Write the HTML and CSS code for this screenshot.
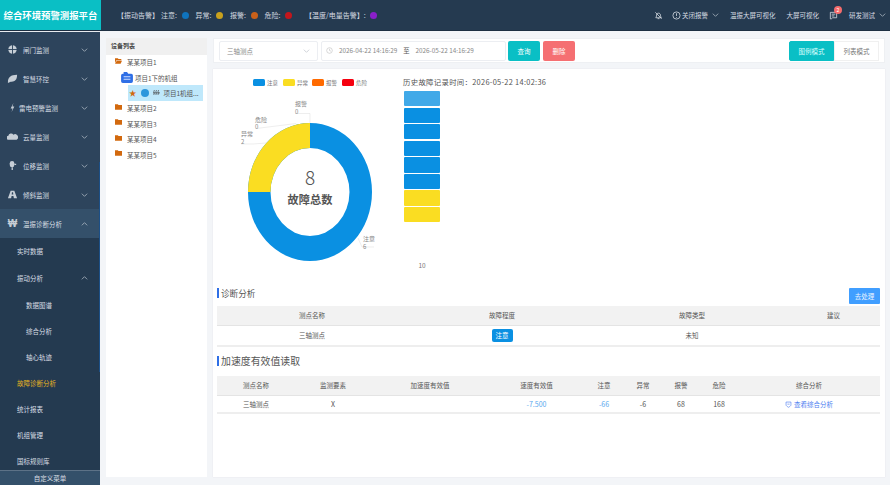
FILE: index.html
```html
<!DOCTYPE html>
<html lang="zh-CN">
<head>
    <meta charset="UTF-8">
    <title>综合环境预警测报平台</title>
    <link rel="stylesheet" href="styles.css">
</head>
<body>
<div class="app">
    <!-- 顶部 -->
    <header class="top">
        <div class="logo">综合环境预警测报平台</div>
        <div class="alarm alarm-first">【振动告警】</div>
        <div class="alarm">注意: <i class="dot dot-blue"></i></div>
        <div class="alarm">异常: <i class="dot dot-yellow"></i></div>
        <div class="alarm">报警: <i class="dot dot-orange"></i></div>
        <div class="alarm">危险: <i class="dot dot-red"></i></div>
        <div class="alarm alarm-temp">【温度/电量告警】: <i class="dot dot-purple"></i></div>
        <div class="top-right">
            <svg class="top-icon" viewBox="0 0 10 10"><path d="M2 7.500c1-1 .6-3 1.200-4.200C3.700 2.300 6 2 6.800 3.300c.6 1 .3 3 1.300 4.200zM4 8.500h2M1.500 1.500l7 7"/></svg>
            <svg class="top-icon top-icon-info" viewBox="0 0 10 10"><circle cx="5" cy="5" r="4"/><path d="M5 2.500v3M5 6.800v.8"/></svg>
            <span class="top-link top-link-close">关闭报警</span>
            <svg class="chev chev-top" viewBox="0 0 10 6"><path d="M1 1l4 4 4-4"/></svg>
            <span class="top-link top-link-wide">温振大屏可视化</span>
            <span class="top-link top-link-wide">大屏可视化</span>
            <span class="msg">
                <svg class="top-icon" viewBox="0 0 10 10"><path d="M1.500 1.500h7v6H4L2.500 8.800H1.500zM3 3.500h4M3 5.500h3"/></svg>
                <b class="badge">2</b>
            </span>
            <span class="top-link top-link-user">研发测试</span>
            <svg class="chev chev-top" viewBox="0 0 10 6"><path d="M1 1l4 4 4-4"/></svg>
        </div>
    </header>

    <!-- 左侧菜单 -->
    <aside class="side">
        <nav class="menu">
            <div class="menu-item">
                <svg class="menu-icon" viewBox="0 0 12 12"><circle cx="6" cy="6" r="4.600"/><path class="cut" d="M1 6h10M6 1v10"/></svg>
                <span>闸门监测</span>
                <svg class="chev" viewBox="0 0 10 6"><path d="M1 1l4 4 4-4"/></svg>
            </div>
            <div class="menu-item">
                <svg class="menu-icon" viewBox="0 0 12 12"><path d="M1 10C1 5 4 2 11 2c0 6-3 8-7 7.500L1 11z"/></svg>
                <span>智慧环控</span>
                <svg class="chev" viewBox="0 0 10 6"><path d="M1 1l4 4 4-4"/></svg>
            </div>
            <div class="menu-item menu-item-tight">
                <svg class="menu-icon" viewBox="0 0 12 12"><path d="M7 1L4 7h2l-1 4 3-6H6z"/></svg>
                <span>雷电预警监测</span>
                <svg class="chev" viewBox="0 0 10 6"><path d="M1 1l4 4 4-4"/></svg>
            </div>
            <div class="menu-item">
                <svg class="menu-icon" viewBox="0 0 12 12"><path d="M1 9.500a2.200 2.200 0 0 1 .5-4.300A3 3 0 0 1 7 4a2.800 2.800 0 0 1 3.500 5.500z"/></svg>
                <span>云量监测</span>
                <svg class="chev" viewBox="0 0 10 6"><path d="M1 1l4 4 4-4"/></svg>
            </div>
            <div class="menu-item">
                <svg class="menu-icon" viewBox="0 0 12 12"><rect x="3" y="1" width="5" height="7" rx="2.500"/><path d="M5 8h1.400v3H5zM8 4h2v1.400H8z"/></svg>
                <span>位移监测</span>
                <svg class="chev" viewBox="0 0 10 6"><path d="M1 1l4 4 4-4"/></svg>
            </div>
            <div class="menu-item">
                <svg class="menu-icon" viewBox="0 0 12 12"><path d="M4 2h4l3 8H7.500L7 7.500H5L4.500 10H1zM5.400 3.500l-.3 2.500h1.800l-.3-2.500z"/></svg>
                <span>倾斜监测</span>
                <svg class="chev" viewBox="0 0 10 6"><path d="M1 1l4 4 4-4"/></svg>
            </div>
            <div class="menu-item menu-item-open">
                <span class="won">₩</span>
                <span>温振诊断分析</span>
                <svg class="chev" viewBox="0 0 10 6"><path d="M1 5l4-4 4 4"/></svg>
            </div>
            <div class="sub sub-first">实时数据</div>
            <div class="sub sub-parent">
                <span>振动分析</span>
                <svg class="chev" viewBox="0 0 10 6"><path d="M1 5l4-4 4 4"/></svg>
            </div>
            <div class="sub sub-deep">数据图谱</div>
            <div class="sub sub-deep">综合分析</div>
            <div class="sub sub-deep">轴心轨迹</div>
            <div class="sub sub-active">故障诊断分析</div>
            <div class="sub">统计报表</div>
            <div class="sub">机组管理</div>
            <div class="sub">国标规则库</div>
        </nav>
        <div class="side-foot">自定义菜单</div>
        <div class="side-scroll"></div>
    </aside>

    <main class="content">
        <!-- 设备树 -->
        <section class="tree">
            <div class="tree-title">设备列表</div>
            <div class="tree-row">
                <svg class="folder" viewBox="0 0 10 8"><path d="M0 0h4l1 1h4v2H2L0 7zM2.500 3.500H10L8 8H0z"/></svg>
                <span>某某项目1</span>
            </div>
            <div class="tree-row tree-row-unit">
                <svg class="unit-icon" viewBox="0 0 14 13"><path d="M3 0h4l1.500 2H12a2 2 0 0 1 2 2v7a2 2 0 0 1-2 2H2a2 2 0 0 1-2-2V4a2 2 0 0 1 2-2h1z" fill="#2f6fe6"/><path d="M3 5h8v1.200H3zM3 8h8v1.200H3z" fill="#cfe0ff"/></svg>
                <span>项目1下的机组</span>
            </div>
            <div class="tree-row tree-row-point">
                <span class="star">★</span>
                <i class="ball"></i>
                <svg class="wave" viewBox="0 0 10 9"><path d="M1 8c2-2-1-4 1-7M4 8c2-2-1-4 1-7M7 8c2-2-1-4 1-7M0 5h10"/></svg>
                <span class="point-name">项目1机组...</span>
            </div>
            <div class="tree-row"><svg class="folder" viewBox="0 0 10 8"><path d="M0 0h4l1 1h5v7H0z"/></svg><span>某某项目2</span></div>
            <div class="tree-row"><svg class="folder" viewBox="0 0 10 8"><path d="M0 0h4l1 1h5v7H0z"/></svg><span>某某项目3</span></div>
            <div class="tree-row"><svg class="folder" viewBox="0 0 10 8"><path d="M0 0h4l1 1h5v7H0z"/></svg><span>某某项目4</span></div>
            <div class="tree-row"><svg class="folder" viewBox="0 0 10 8"><path d="M0 0h4l1 1h5v7H0z"/></svg><span>某某项目5</span></div>
        </section>

        <div class="right">
            <!-- 查询条件 -->
            <div class="toolbar">
                <div class="select">
                    <span>三轴测点</span>
                    <svg class="chev chev-gray" viewBox="0 0 10 6"><path d="M1 1l4 4 4-4"/></svg>
                </div>
                <div class="dates">
                    <svg class="clock" viewBox="0 0 10 10"><circle cx="5" cy="5" r="4"/><path d="M5 2.500V5l2 1"/></svg>
                    <span>2026-04-22 14:16:29</span>
                    <span class="date-to">至</span>
                    <span>2026-05-22 14:16:29</span>
                </div>
                <button class="btn btn-teal">查询</button>
                <button class="btn btn-red">删除</button>
                <div class="modes">
                    <span class="mode mode-on">图例模式</span>
                    <span class="mode">列表模式</span>
                </div>
            </div>

            <div class="panel">
                <div class="charts">
                    <svg class="donut" viewBox="213 69 190 216">
                        <g class="legend">
                            <rect x="253" y="79" width="12" height="7" rx="1.500" fill="#0a90e2"/><text x="267" y="84.500">注意</text>
                            <rect x="283" y="79" width="12" height="7" rx="1.500" fill="#fadd22"/><text x="297" y="84.500">异常</text>
                            <rect x="312" y="79" width="12" height="7" rx="1.500" fill="#ff6a00"/><text x="326" y="84.500">报警</text>
                            <rect x="342" y="79" width="12" height="7" rx="1.500" fill="#f5000f"/><text x="356" y="84.500">危险</text>
                        </g>
                        <path d="M248 192A62 69 0 0 1 372 192A62 69 0 0 1 248 192ZM270.500 192A39.500 44 0 0 0 349.500 192A39.500 44 0 0 0 270.500 192Z" fill="#0a90e2"/>
                        <path d="M248 192A62 69 0 0 1 310 123V148A39.500 44 0 0 0 270.500 192Z" fill="#fadd22"/>
                        <path class="lead" d="M295 113.500h15v9.500M256 128.500l40-5M241 144h12l13-1M358 238l4 9h12"/>
                        <g class="pie-label">
                            <text x="295" y="105.500">报警</text><text x="295" y="113.500">0</text>
                            <text x="255" y="121.500">危险</text><text x="255" y="129">0</text>
                            <text x="241" y="136">异常</text><text x="241" y="144">2</text>
                            <text x="363" y="241">注意</text><text x="363" y="249">6</text>
                        </g>
                        <text class="pie-num" x="310" y="185" text-anchor="middle">8</text>
                        <text class="pie-title" x="310" y="204" text-anchor="middle">故障总数</text>
                    </svg>
                    <div class="history">
                        <div class="history-title">历史故障记录时间：2026-05-22 14:02:36</div>
                        <div class="bars">
                            <div class="bar bar-hover"></div>
                            <div class="bar"></div>
                            <div class="bar"></div>
                            <div class="bar"></div>
                            <div class="bar"></div>
                            <div class="bar"></div>
                            <div class="bar bar-yellow"></div>
                            <div class="bar bar-yellow"></div>
                        </div>
                        <div class="bars-axis">10</div>
                    </div>
                </div>

                <div class="sec-head">
                    <h3 class="sec-title">诊断分析</h3>
                    <button class="btn-do">去处理</button>
                </div>
                <table class="grid grid-one">
                    <colgroup><col class="c190"><col class="c190"><col class="c190"><col></colgroup>
                    <tr><th>测点名称</th><th>故障程度</th><th>故障类型</th><th>建议</th></tr>
                    <tr><td>三轴测点</td><td><span class="tag">注意</span></td><td>未知</td><td></td></tr>
                </table>

                <h3 class="sec-title sec-title-big">加速度有效值读取</h3>
                <table class="grid grid-two">
                    <colgroup><col class="w78"><col class="w76"><col class="w118"><col class="w95"><col class="w40"><col class="w38"><col class="w38"><col class="w38"><col></colgroup>
                    <tr><th>测点名称</th><th>监测要素</th><th>加速度有效值</th><th>速度有效值</th><th>注意</th><th>异常</th><th>报警</th><th>危险</th><th>综合分析</th></tr>
                    <tr>
                        <td>三轴测点</td><td class="num">X</td><td></td><td class="num val-blue">-7.500</td><td class="num val-blue">-66</td><td class="num">-6</td><td class="num">68</td><td class="num">168</td>
                        <td><a class="look"><svg class="shield" viewBox="0 0 10 10"><path d="M1.500 1.500h7v4c0 1.500-2 2.500-3.500 3.500C3.500 8 1.500 7 1.500 5.500zM3.500 4.500h3"/></svg>查看综合分析</a></td>
                    </tr>
                </table>
            </div>
            <table class="grid grid-two grid-peek">
                <colgroup><col class="w78"><col class="w76"><col class="w118"><col class="w95"><col class="w40"><col class="w38"><col class="w38"><col class="w38"><col></colgroup>
                <tr><td>测点名称</td><td>监测要素</td><td>加速度有效值</td><td>速度有效值</td><td>注意</td><td>异常</td><td>报警</td><td>危险</td><td>综合分析</td></tr>
            </table>
        </div>
    </main>
</div>
</body>
</html>
```

FILE: styles.css
```css
* {
    box-sizing: border-box;
}
html, body {
    margin: 0;
    height: 100%;
    overflow: hidden;
}
body {
    font-family: "Noto Sans CJK SC", "Liberation Sans", sans-serif;
    font-size: 6.5px;
    color: #555;
    background: #f3f5f8;
}
.app {
    display: grid;
    grid-template-columns: 100px minmax(0, 1fr);
    grid-template-rows: 31px minmax(0, 1fr);
    height: 485px;
    overflow: hidden;
}

/* 顶部 */
.top {
    grid-column: 1 / 3;
    display: flex;
    align-items: center;
    background: #253a50;
    color: #d5dbe2;
    border-bottom: 1px solid #1d2f42;
}
.logo {
    width: 101px;
    height: 100%;
    margin-right: 16px;
    background: #0abfc5;
    color: #fff;
    font-size: 9.400px;
    font-weight: bold;
    line-height: 30px;
    text-align: center;
    white-space: nowrap;
}
.alarm {
    display: flex;
    align-items: center;
    font-size: 7px;
    margin-right: 7px;
    white-space: pre;
}
.alarm-first {
    margin-right: 2px;
}
.alarm-temp {
    margin-left: 6px;
}
.dot {
    width: 7px;
    height: 7px;
    border-radius: 50%;
    margin-left: 3px;
}
.dot-blue { background: #0f73bd; }
.dot-yellow { background: #c9a11d; }
.dot-orange { background: #c8601a; }
.dot-red { background: #c3161c; }
.dot-purple { background: #8a1fc9; }
.top-right {
    display: flex;
    align-items: center;
    margin-left: auto;
    padding-right: 4px;
}
.top-icon {
    width: 9px;
    height: 9px;
    fill: none;
    stroke: #d5dbe2;
    stroke-width: .9;
}
.top-icon-info {
    margin-left: 9px;
}
.top-link {
    font-size: 6.500px;
    white-space: nowrap;
}
.top-link-close {
    margin-left: 1px;
}
.top-link-wide {
    margin-left: 11px;
}
.top-link-user {
    margin-left: 11px;
}
.msg {
    position: relative;
    display: flex;
    margin-left: 10px;
}
.badge {
    position: absolute;
    left: 5px;
    top: -5px;
    width: 8px;
    height: 8px;
    border-radius: 50%;
    background: #f56c6c;
    color: #fff;
    font-size: 5px;
    font-weight: normal;
    line-height: 8px;
    text-align: center;
}
.chev {
    width: 7px;
    height: 4px;
    margin-left: auto;
    fill: none;
    stroke: #b9c2cc;
    stroke-width: 1.100;
}
.chev-top {
    margin-left: 4px;
}
.chev-gray {
    stroke: #c0c4cc;
}

/* 左侧菜单 */
.side {
    position: relative;
    display: flex;
    flex-direction: column;
    min-height: 0;
    background: #2d445c;
    color: #d8dee4;
    overflow: hidden;
    border-top: 1px solid #e8ebef;
}
.menu {
    flex: 1;
    min-height: 0;
    overflow: hidden;
    padding-top: 3px;
}
.menu-item {
    display: flex;
    align-items: center;
    gap: 5px;
    height: 29px;
    padding: 0 12px 0 7px;
}
.menu-item-tight {
    gap: 1px;
}
.menu-item-open {
    background: #34506a;
}
.menu-icon {
    width: 11px;
    height: 11px;
    fill: #c6ced6;
    flex: none;
}
.menu-icon .cut {
    fill: none;
    stroke: #2d445c;
    stroke-width: 1;
}
.won {
    width: 11px;
    font-family: "Liberation Sans", sans-serif;
    font-size: 10px;
    font-weight: bold;
    color: #c6ced6;
    text-align: center;
}
.sub {
    display: flex;
    align-items: center;
    height: 26px;
    padding: 0 12px 0 17px;
    background: #243a50;
}
.sub-first {
    height: 25px;
}
.sub-parent {
    height: 29px;
}
.sub-deep {
    padding-left: 26px;
}
.sub-active {
    color: #e6b422;
}
.side-foot {
    flex: none;
    height: 15px;
    line-height: 15px;
    text-align: center;
    background: #34506a;
    border-top: 1px solid #5d7287;
}
.side-scroll {
    position: absolute;
    right: 0;
    top: 130px;
    width: 1.500px;
    height: 210px;
    background: #1c4f86;
}

/* 内容 */
.content {
    display: flex;
    min-width: 0;
    min-height: 0;
    overflow: hidden;
    padding: 7px 5px 0 6px;
    gap: 6px;
}
.tree {
    width: 101px;
    flex: none;
    height: 439px;
    background: #fff;
    font-size: 6.500px;
}
.tree-title {
    height: 16.500px;
    line-height: 16.500px;
    padding-left: 5px;
    background: #f0f0f0;
    font-weight: bold;
    font-size: 6px;
    color: #444;
}
.tree-row {
    display: flex;
    align-items: center;
    gap: 5px;
    height: 15.400px;
    padding-left: 9px;
}
.folder {
    width: 7px;
    height: 6px;
    margin-top: -3px;
    fill: #d2690e;
    flex: none;
}
.tree-row-unit {
    gap: 2px;
    padding-left: 15px;
}
.unit-icon {
    width: 12px;
    height: 11px;
}
.tree-row-point {
    gap: 3px;
    width: 75px;
    margin-left: 22px;
    padding-left: 1px;
    background: #bfe8fb;
}
.star {
    font-size: 7.500px;
    color: #d2690e;
    line-height: 1;
}
.ball {
    width: 8px;
    height: 8px;
    border-radius: 50%;
    background: #2e97dc;
    margin: 0 1px 0 1px;
    flex: none;
}
.wave {
    width: 7px;
    height: 7px;
    fill: none;
    stroke: #444;
    stroke-width: 1;
    flex: none;
}
.point-name {
    white-space: nowrap;
    margin-left: 1px;
}
.right {
    flex: 1;
    min-width: 0;
}
.toolbar {
    display: flex;
    align-items: center;
    height: 25px;
    padding: 0 5px;
    background: #fff;
    border: 1px solid #eef0f3;
}
.select, .dates {
    display: flex;
    align-items: center;
    height: 20px;
    border: 1px solid #eceef2;
    border-radius: 2px;
    color: #888;
}
.select {
    width: 99px;
    padding: 0 7px 0 7px;
}
.dates {
    width: 185px;
    margin: 0 2px 0 3px;
    padding-left: 4px;
    font-size: 6.300px;
    white-space: nowrap;
}
.clock {
    width: 7px;
    height: 7px;
    margin-right: 6px;
    fill: none;
    stroke: #bbb;
    stroke-width: .8;
    flex: none;
}
.date-to {
    margin: 0 6px;
    color: #555;
}
.btn {
    width: 32px;
    height: 20px;
    padding: 0;
    border: 0;
    border-radius: 2px;
    color: #fff;
    font: inherit;
}
.btn-teal {
    background: #0abfc5;
    margin-right: 3px;
}
.btn-red {
    background: #f56f72;
}
.modes {
    display: flex;
    margin-left: auto;
    height: 20px;
    line-height: 20px;
    text-align: center;
}
.mode {
    width: 45px;
    color: #777;
    border: 1px solid #f0f0f0;
    line-height: 18px;
}
.mode-on {
    background: #0abfc5;
    border-color: #0abfc5;
    border-radius: 2px 0 0 2px;
    color: #dff;
}

.panel {
    height: 408px;
    margin-top: 6px;
    padding: 0 5px 0 4px;
    background: #fff;
    box-shadow: 0 0 1px #d9dde2;
}
.charts {
    display: flex;
    height: 216px;
    margin-left: -4px;
}
.donut {
    width: 190px;
    height: 216px;
    flex: none;
}
.legend text {
    font-size: 5.500px;
    fill: #777;
}
.pie-label text {
    font-size: 6px;
    fill: #888;
}
.lead {
    fill: none;
    stroke: #e2e2e2;
    stroke-width: .6;
}
.pie-num {
    font-size: 19px;
    fill: #555;
    font-family: "Noto Sans CJK SC", sans-serif;
    font-weight: 300;
}
.pie-title {
    font-size: 11.200px;
    font-weight: bold;
    fill: #555;
}
.history {
    padding-top: 7px;
}
.history-title {
    height: 12px;
    line-height: 12px;
    font-size: 7.400px;
    letter-spacing: .3px;
    color: #555;
    white-space: nowrap;
}
.bars {
    display: flex;
    flex-direction: column;
    gap: 1.400px;
    width: 36px;
    margin: 3px 0 0 1px;
}
.bar {
    height: 15.200px;
    background: #0a90e2;
    border-radius: 1px;
}
.bar-hover {
    background: #41a9e8;
}
.bar-yellow {
    background: #fadd22;
}
.bars-axis {
    width: 36px;
    margin: 38px 0 0 1px;
    text-align: center;
    color: #777;
}
.sec-head {
    display: flex;
    justify-content: space-between;
    height: 21px;
}
.sec-title {
    margin: 0;
    height: 16px;
    line-height: 16px;
    font-size: 8.600px;
    font-weight: normal;
    color: #555;
    position: relative;
    padding-left: 4px;
}
.sec-title::before {
    content: "";
    position: absolute;
    left: 0;
    top: 3px;
    width: 2px;
    height: 10px;
    background: #2f6fe6;
}
.sec-title-big {
    margin: 6px 0 7px;
    font-size: 9.900px;
}
.btn-do {
    width: 31px;
    height: 16px;
    margin-top: 3px;
    padding: 0;
    border: 0;
    border-radius: 1px;
    background: #409eff;
    color: #e8f3ff;
    font: inherit;
}
.grid {
    width: 100%;
    table-layout: fixed;
    border-collapse: collapse;
}
.grid th {
    height: 19px;
    padding: 0;
    background: #f2f2f2;
    border-bottom: 1px solid #e4e4e4;
    font-weight: normal;
}
.grid td {
    padding: 0;
    text-align: center;
    border-bottom: 2px solid #eee;
}
.grid-one td {
    height: 21px;
}
.grid-two td {
    height: 18px;
}
.grid .num {
    font-size: 7px;
}
.c190 { width: 190px; }
.w78 { width: 78px; }
.w76 { width: 76px; }
.w118 { width: 118px; }
.w95 { width: 95px; }
.w40 { width: 40px; }
.w38 { width: 38px; }
.tag {
    display: inline-block;
    width: 21px;
    height: 13px;
    line-height: 13px;
    border-radius: 2px;
    background: #0a90e2;
    color: #fff;
    vertical-align: middle;
}
.val-blue {
    color: #5aa9ee;
}
.look {
    color: #4c7df0;
}
.shield {
    width: 7px;
    height: 7px;
    margin-right: 2px;
    vertical-align: -1px;
    fill: none;
    stroke: #4c7df0;
    stroke-width: .9;
}
.grid-peek {
    width: 663px;
    margin: 3px 0 0 4px;
    color: #999;
}
.grid-peek td {
    border: 0;
}
```
